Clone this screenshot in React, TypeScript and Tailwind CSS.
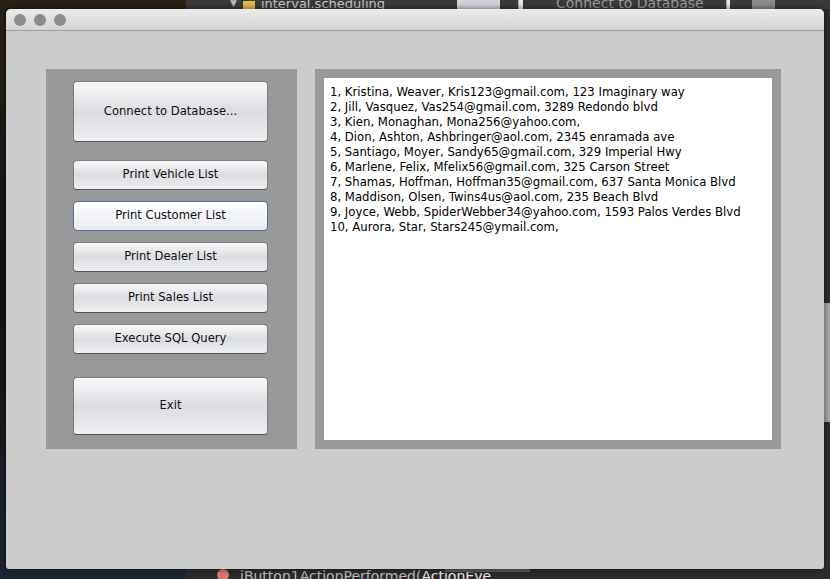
import React from "react";

const rows = [
  "1, Kristina, Weaver, Kris123@gmail.com, 123 Imaginary way",
  "2, Jill, Vasquez, Vas254@gmail.com, 3289 Redondo blvd",
  "3, Kien, Monaghan, Mona256@yahoo.com,",
  "4, Dion, Ashton, Ashbringer@aol.com, 2345 enramada ave",
  "5, Santiago, Moyer, Sandy65@gmail.com, 329 Imperial Hwy",
  "6, Marlene, Felix, Mfelix56@gmail.com, 325 Carson Street",
  "7, Shamas, Hoffman, Hoffman35@gmail.com, 637 Santa Monica Blvd",
  "8, Maddison, Olsen, Twins4us@aol.com, 235 Beach Blvd",
  "9, Joyce, Webb, SpiderWebber34@yahoo.com, 1593 Palos Verdes Blvd",
  "10, Aurora, Star, Stars245@ymail.com,",
];

const AquaButton = ({ label, tall, focused, className }: any) => {
  return (
    <button
      className={`w-[195px] flex items-center justify-center rounded-[4px] border text-[11.6px] text-[#111] ${
        tall ? "h-[61px]" : "h-[30px]"
      } ${
        focused
          ? "border-[#4f6f9c] bg-gradient-to-b from-[#ffffff] via-[#f3f4f7] to-[#e9ebf0]"
          : "border-[#7c7c7c] border-b-[#555555] bg-gradient-to-b from-[#f9f9fa] via-[#dcdde2] to-[#eeeff2]"
      } ${className || ""}`}
      style={{ fontFamily: '"DejaVu Sans", sans-serif' }}
    >
      {label}
    </button>
  );
};

export default function App() {
  return (
    <div className="relative w-[830px] h-[579px] overflow-hidden bg-[#2e2e2e]">
      {/* desktop / ide behind the window */}
      <div className="absolute left-0 top-0 w-[186px] h-[579px] bg-gradient-to-b from-[#2a2118] via-[#141414] to-[#1d2630]" />
      <div className="absolute left-[186px] top-0 w-[644px] h-[9px] bg-[#3a3a3a]" />
      <div
        className="absolute left-[230px] top-[-6px] flex items-center gap-[6px] text-[13px] text-[#c8c8c8]"
        style={{ fontFamily: '"DejaVu Sans", sans-serif' }}
      >
        <span className="text-[9px] text-[#bbb]">▼</span>
        <span className="w-[12px] h-[10px] bg-[#e8b84a] mt-[4px]" />
        <span>interval.scheduling</span>
      </div>
      <div className="absolute left-[457px] top-0 w-[43px] h-[9px] bg-[#d2d2da]" />
      <div className="absolute left-[518px] top-0 w-[5px] h-[9px] bg-[#dfe6f5] border-l border-[#d6a93a]" />
      <div
        className="absolute left-[556px] top-[-7px] text-[14px] text-[#9a9a9a]"
        style={{ fontFamily: '"DejaVu Sans", sans-serif' }}
      >
        Connect to Database
      </div>
      <div className="absolute left-[726px] top-0 w-[4px] h-[9px] bg-[#dfe6f5] border-l border-[#d6a93a]" />
      <div className="absolute left-[752px] top-0 w-[23px] h-[9px] bg-[#8c8c8c]" />
      <div className="absolute left-[824px] top-[303px] w-[6px] h-[119px] bg-[#a9a9a9]" />
      <div className="absolute left-[186px] top-[569px] w-[644px] h-[10px] bg-[#2b2b2b]" />
      <div className="absolute left-[217px] top-[569px] w-[12px] h-[12px] rounded-full bg-[#d8766a]" />
      <div
        className="absolute left-[240px] top-[566px] text-[14px] text-[#b8b8b8]"
        style={{ fontFamily: '"DejaVu Sans", sans-serif' }}
      >
        jButton1ActionPerformed(<span className="text-[#e6e6e6]">ActionEve</span>
      </div>
      <div className="absolute left-[445px] top-[569px] w-[85px] h-[3px] bg-[#5a5a5a]" />

      {/* window */}
      <div className="absolute left-[6px] top-[9px] w-[818px] h-[560px] rounded-t-[5px] rounded-b-[3px] bg-[#cccccc] overflow-hidden shadow-[0_0_6px_rgba(0,0,0,0.6)]">
        <div className="h-[22px] flex items-center gap-[8px] pl-[8px] bg-gradient-to-b from-[#ececec] to-[#d4d4d4] border-b border-[#9d9d9d]">
          <span className="w-[12px] h-[12px] rounded-full bg-[#8b8b90]" />
          <span className="w-[12px] h-[12px] rounded-full bg-[#8b8b90]" />
          <span className="w-[12px] h-[12px] rounded-full bg-[#8b8b90]" />
        </div>

        <div className="flex pl-[40px] pt-[38px] gap-[18px]">
          <div className="w-[251px] h-[380px] bg-[#999999] flex flex-col items-start pl-[27px] pt-[12px]">
            <AquaButton label="Connect to Database..." tall />
            <AquaButton label="Print Vehicle List" className="mt-[18px]" />
            <AquaButton label="Print Customer List" focused className="mt-[11px]" />
            <AquaButton label="Print Dealer List" className="mt-[11px]" />
            <AquaButton label="Print Sales List" className="mt-[11px]" />
            <AquaButton label="Execute SQL Query" className="mt-[11px]" />
            <button
              className="w-[195px] h-[58px] mt-[23px] flex items-center justify-center rounded-[4px] border border-[#7c7c7c] border-b-[#555555] bg-gradient-to-b from-[#f9f9fa] via-[#dcdde2] to-[#eeeff2] text-[11.6px] text-[#111]"
              style={{ fontFamily: '"DejaVu Sans", sans-serif' }}
            >
              Exit
            </button>
          </div>

          <div className="w-[466px] h-[380px] bg-[#999999] p-[9px]">
            <div
              className="w-full h-full bg-white pt-[7px] pl-[6px] text-[11.7px] leading-[15px] text-black"
              style={{ fontFamily: '"DejaVu Sans", sans-serif' }}
            >
              {rows.map((r, i) => (
                <div key={i}>{r}</div>
              ))}
            </div>
          </div>
        </div>
      </div>
    </div>
  );
}
